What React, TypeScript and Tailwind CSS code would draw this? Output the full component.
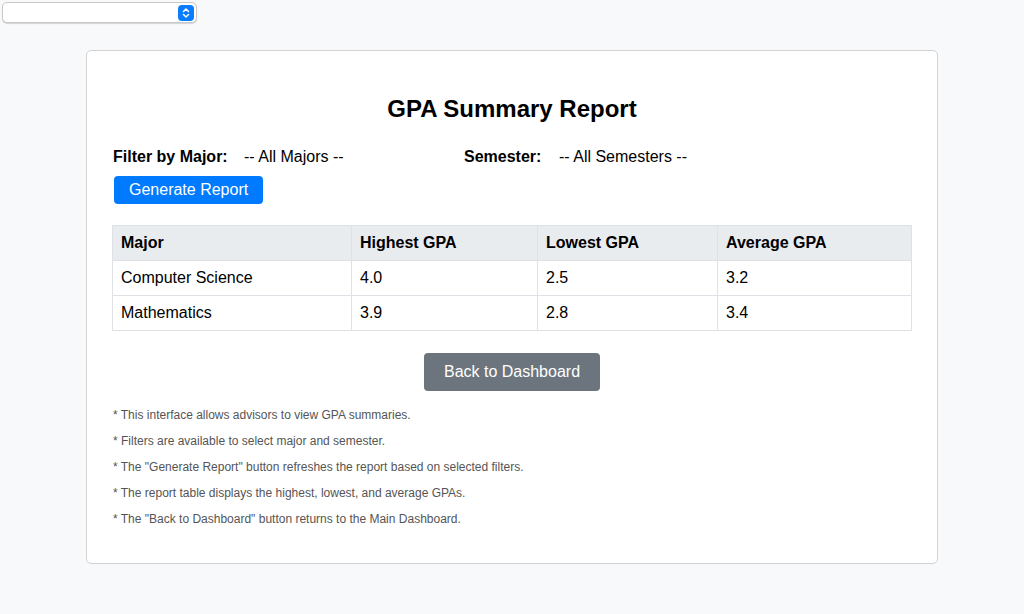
import { ChevronsUpDown } from 'lucide-react';

const rows = [
  { major: 'Computer Science', high: '4.0', low: '2.5', avg: '3.2' },
  { major: 'Mathematics', high: '3.9', low: '2.8', avg: '3.4' },
];

const notes = [
  '* This interface allows advisors to view GPA summaries.',
  '* Filters are available to select major and semester.',
  '* The "Generate Report" button refreshes the report based on selected filters.',
  '* The report table displays the highest, lowest, and average GPAs.',
  '* The "Back to Dashboard" button returns to the Main Dashboard.',
];

export default function App() {
  return (
    <div className="min-h-[614px] bg-[#f8f9fa] font-['Liberation_Sans',Arial,sans-serif] text-black pt-[2px] pb-[50px]">
      {/* Top select */}
      <div className="ml-[2px] w-[195px] h-[21px] bg-white border border-[#c8c8c8] rounded-[5px] shadow-[0_1px_1px_rgba(0,0,0,0.15)] flex items-center justify-end pr-[2px]">
        <div className="w-[16px] h-[16px] rounded-[4px] bg-[#0a7cff] flex items-center justify-center">
          <ChevronsUpDown size={12} color="white" strokeWidth={3} />
        </div>
      </div>

      {/* Card */}
      <div className="mx-auto mt-[27px] w-[852px] bg-white border border-[#d3d3d3] rounded-[5px] px-[25px] pt-[25px] pb-[37px]">
        <h2 className="text-[24px] font-bold text-center mt-[19px] mb-[25px] leading-[28px]">GPA Summary Report</h2>

        <div className="flex items-center text-[16px] leading-[18px] pl-[1px]">
          <span className="font-bold w-[131px]">Filter by Major:</span>
          <span className="w-[220px]">-- All Majors --</span>
          <span className="font-bold w-[95px]">Semester:</span>
          <span>-- All Semesters --</span>
        </div>

        <button className="mt-[10px] ml-[2px] bg-[#007bff] text-white text-[16px] leading-[18px] px-[15px] py-[5px] rounded-[4px]">
          Generate Report
        </button>

        <table className="mt-[21px] w-[800px] border-collapse text-[16px] leading-[18px]">
          <thead>
            <tr className="bg-[#e9ecef]">
              <th className="text-left font-bold border border-[#dee2e6] px-[8px] py-[8px] w-[239px]">Major</th>
              <th className="text-left font-bold border border-[#dee2e6] px-[8px] py-[8px] w-[186px]">Highest GPA</th>
              <th className="text-left font-bold border border-[#dee2e6] px-[8px] py-[8px] w-[180px]">Lowest GPA</th>
              <th className="text-left font-bold border border-[#dee2e6] px-[8px] py-[8px]">Average GPA</th>
            </tr>
          </thead>
          <tbody>
            {rows.map((r) => (
              <tr key={r.major}>
                <td className="border border-[#dee2e6] px-[8px] py-[8px]">{r.major}</td>
                <td className="border border-[#dee2e6] px-[8px] py-[8px]">{r.high}</td>
                <td className="border border-[#dee2e6] px-[8px] py-[8px]">{r.low}</td>
                <td className="border border-[#dee2e6] px-[8px] py-[8px]">{r.avg}</td>
              </tr>
            ))}
          </tbody>
        </table>

        <div className="flex justify-center mt-[22px]">
          <button className="bg-[#6c757d] text-white text-[16px] leading-[18px] px-[20px] py-[10px] rounded-[4px]">
            Back to Dashboard
          </button>
        </div>

        <div className="mt-[17px] pl-[1px] text-[12px] leading-[14px] text-[#555] flex flex-col gap-[12px]">
          {notes.map((n) => (
            <p key={n}>{n}</p>
          ))}
        </div>
      </div>
    </div>
  );
}
